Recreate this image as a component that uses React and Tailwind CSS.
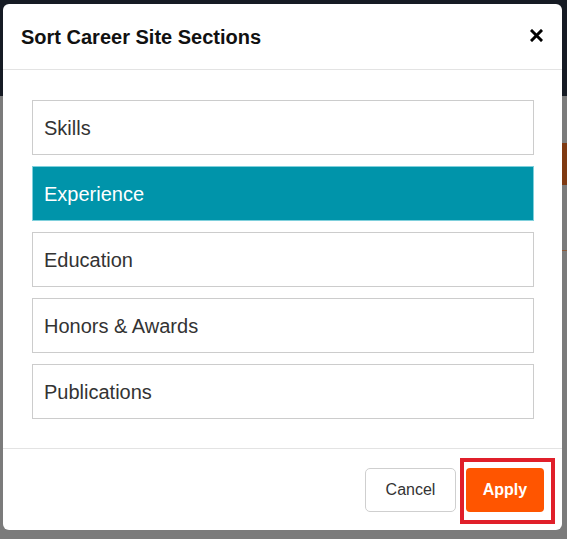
import React from 'react';

const sections = ['Skills', 'Experience', 'Education', 'Honors & Awards', 'Publications'];

export default function App() {
  const active = 'Experience';

  return (
    <div className="relative w-[567px] h-[539px] overflow-hidden bg-[#7b7b7b] font-['Liberation_Sans',Arial,sans-serif]">
      {/* page underneath the overlay */}
      <div className="absolute inset-x-0 top-0 h-[96px] bg-[#161b24]" />
      <div className="absolute right-0 top-[143px] w-[6px] h-[42px] bg-[#7f3a12]" />
      <div className="absolute right-0 top-[250px] w-[6px] h-px bg-[#8a5a3a]" />

      <div className="absolute left-[3px] top-[4px] w-[559px] h-[526px] bg-white rounded-[6px] flex flex-col">
        <div className="h-[66px] flex items-center justify-between pl-[18px] pr-[19px] border-b border-[#e3e3e3]">
          <h2 className="text-[20px] font-bold text-[#111]">Sort Career Site Sections</h2>
          <button className="text-black mt-[-3px]" aria-label="Close">
            <svg width="13" height="13" viewBox="0 0 13 13">
              <path d="M2 2 L11 11 M11 2 L2 11" stroke="currentColor" strokeWidth="3" strokeLinecap="square" />
            </svg>
          </button>
        </div>

        <div className="flex-1 pl-[29px] pr-[28px] pt-[30px] flex flex-col gap-[11px] border-b border-[#e3e3e3]">
          {sections.map((s) => (
            <div
              key={s}
              className={
                s === active
                  ? 'h-[55px] flex items-center pl-[11px] text-[20px] bg-[#0094aa] border border-[#7fd0dc] text-white'
                  : 'h-[55px] flex items-center pl-[11px] text-[20px] bg-white border border-[#cccccc] text-[#333]'
              }
            >
              {s}
            </div>
          ))}
        </div>

        <div className="h-[81px] flex items-center justify-end pr-[18px] gap-[10px]">
          <button className="w-[91px] h-[44px] rounded-[5px] border border-[#cfcfcf] bg-white text-[16px] text-[#333]">
            Cancel
          </button>
          <button className="w-[78px] h-[44px] rounded-[4px] bg-[#ff5500] text-white text-[16px] font-bold">
            Apply
          </button>
        </div>

        {/* highlight annotation around Apply */}
        <div className="absolute left-[457px] top-[454px] w-[95px] h-[66px] border-[4px] border-[#e01f2a] pointer-events-none" />
      </div>
    </div>
  );
}
